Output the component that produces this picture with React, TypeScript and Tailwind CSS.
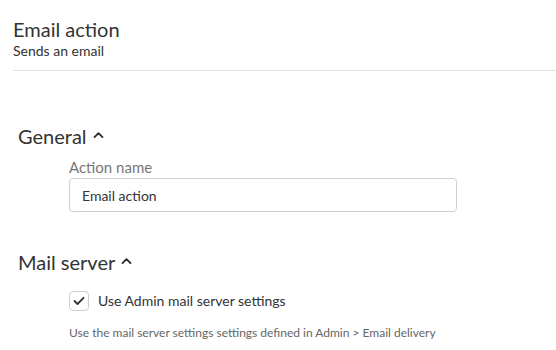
import React from "react";

function Caret() {
  return (
    <svg width="11" height="8" viewBox="0 0 11 8" className="ml-[6px] -mt-0.5" fill="none">
      <path d="M1.5 6.2 L5.5 2.2 L9.5 6.2" stroke="#2a2a2a" strokeWidth="1.8" strokeLinecap="round" strokeLinejoin="round" />
    </svg>
  );
}

function Section({ title, children }: { title: string; children: React.ReactNode }) {
  return (
    <section>
      <h2 className="flex items-center text-[20px] leading-6 text-[#333] px-[18px]">
        {title}
        <Caret />
      </h2>
      {children}
    </section>
  );
}

export default function App() {
  return (
    <div className="w-[556px] h-[350px] bg-white overflow-hidden font-['Lato',sans-serif] text-[#333]">
      {/* Header */}
      <div className="pl-[13px] pt-[17px]">
        <h1 className="text-[20px] leading-6">Email action</h1>
        <p className="text-[14px] leading-5">Sends an email</p>
        <div className="mt-[9px] h-px bg-[#e3e3e3]" />
      </div>

      <div className="pt-[53px]">
        <Section title="General">
          <div className="pl-[69px] pt-[11px]">
            <label className="block text-[15px] leading-4 text-[#777]">Action name</label>
            <input
              defaultValue="Email action"
              className="mt-[3px] w-[388px] h-[34px] rounded border border-[#d0d0d0] px-3 text-[14px] text-[#333] outline-none"
            />
          </div>
        </Section>

        <div className="pt-[38px]">
          <Section title="Mail server">
            <div className="pl-[69px] pt-[17px]">
              <div className="flex items-center gap-[9px]">
                <span className="flex h-5 w-5 items-center justify-center rounded-sm border border-[#cfcfcf] bg-white">
                  <svg width="12" height="10" viewBox="0 0 12 10" fill="none">
                    <path d="M1.5 5 L4.5 8 L10.5 1.8" stroke="#333" strokeWidth="1.8" strokeLinecap="round" strokeLinejoin="round" />
                  </svg>
                </span>
                <span className="text-[14px] leading-5">Use Admin mail server settings</span>
              </div>
              <p className="mt-[14px] text-[12px] leading-4 text-[#666]">
                Use the mail server settings settings defined in Admin &gt; Email delivery
              </p>
            </div>
          </Section>
        </div>
      </div>
    </div>
  );
}
